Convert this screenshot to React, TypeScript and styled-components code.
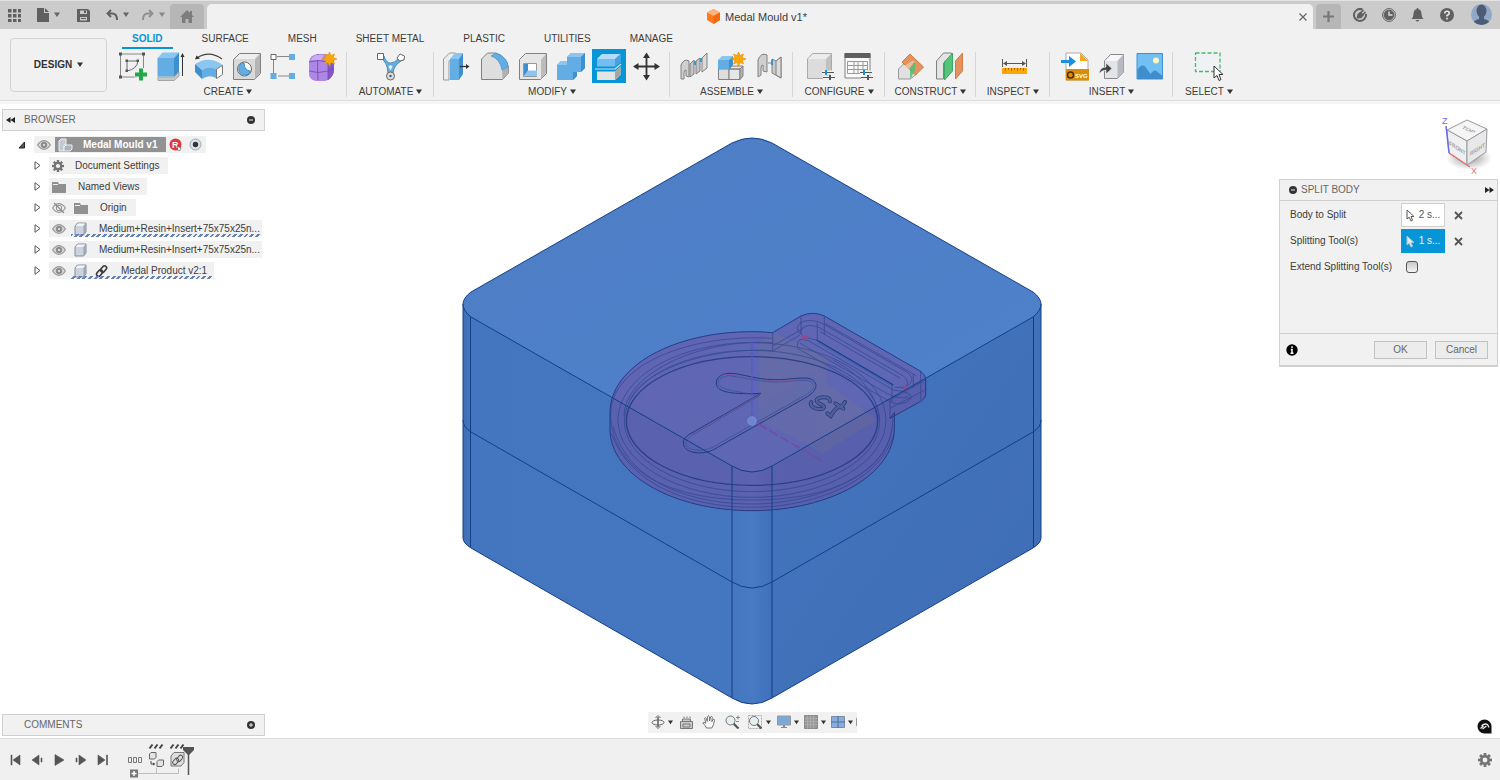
import React from "react";
import styled, { createGlobalStyle, css } from "styled-components";

const GlobalStyle = createGlobalStyle`
  *, *::before, *::after { box-sizing: border-box; }
  html, body { margin: 0; padding: 0; background: #fff; }
  body, button, input {
    font-family: "Liberation Sans", Arial, sans-serif;
    font-size: 10px;
    line-height: 14px;
    color: #3c3c3c;
  }
  button { border: 0; padding: 0; background: none; cursor: pointer; }
  svg { display: block; flex: none; }
`;

/* ---------- shell ---------- */

const Shell = styled.div`
  display: flex;
  flex-direction: column;
  min-height: 100vh;
`;

const TitleBar = styled.header`
  display: flex;
  align-items: stretch;
  height: 29px;
  padding-top: 3px;
  background: #cbcbcb;
  border-top: 1px solid #e2e2e2;
`;

const QuickTools = styled.div`
  display: flex;
  width: 170px;
`;

const QuickButton = styled.button<{ $width: number; $dim?: boolean }>`
  display: flex;
  align-items: center;
  justify-content: center;
  gap: 5px;
  width: ${(p) => p.$width}px;
  padding-bottom: 3px;
  color: ${(p) => (p.$dim ? "#8f8f8f" : "#606060")};
`;

const SideTab = styled.button<{ $width: number }>`
  display: flex;
  align-items: center;
  justify-content: center;
  width: ${(p) => p.$width}px;
  border-radius: 4px 4px 0 0;
  background: #b6b6b6;
  color: #7d7d7d;
`;

const DocumentTab = styled.div`
  display: flex;
  flex: 1;
  align-items: center;
  justify-content: center;
  margin: 0 3px;
  padding-left: 14px;
  border-radius: 5px 5px 0 0;
  background: #f1f1f1;
  font-size: 11px;
`;

const DocumentTitle = styled.div`
  display: flex;
  flex: 1;
  align-items: center;
  justify-content: center;
  gap: 5px;
`;

const CloseTab = styled.button`
  display: flex;
  padding: 4px 6px;
`;

const AccountTools = styled.div`
  display: flex;
  padding: 0 8px 0 4px;
`;

const Avatar = styled.button`
  margin-left: 10px;
  align-self: flex-start;
`;

/* ---------- ribbon ---------- */

const Ribbon = styled.div`
  display: flex;
  height: 72px;
  background: #f1f1f1;
  border-bottom: 1px solid #dcdcdc;
`;

const RibbonEdge = styled.div`
  height: 3px;
  background: #f5f5f5;
`;

const WorkspaceButton = styled.button`
  display: flex;
  align-items: center;
  justify-content: center;
  gap: 5px;
  width: 97px;
  height: 54px;
  margin: 9px 2px 0 10px;
  border: 1px solid #d2d2d2;
  border-radius: 4px;
  font-weight: bold;
  color: #333;
`;

const RibbonMain = styled.div`
  flex: 1;
`;

const TabRow = styled.nav`
  display: flex;
  gap: 19px;
  height: 20px;
  padding-left: 13px;
`;

const RibbonTab = styled.button<{ $active?: boolean }>`
  height: 20px;
  padding: 2px 10px 0;
  border-bottom: 2px solid transparent;
  white-space: nowrap;
  ${(p) =>
    p.$active &&
    css`
      border-color: #0696d7;
      color: #0696d7;
      font-weight: bold;
    `}
`;

const GroupRow = styled.div`
  display: flex;
`;

const Group = styled.section<{ $width: number }>`
  position: relative;
  display: flex;
  flex-direction: column;
  align-items: center;
  width: ${(p) => p.$width}px;
  padding-top: 2px;
  &:not(:last-child)::after {
    content: "";
    position: absolute;
    right: 0;
    top: 3px;
    width: 1px;
    height: 45px;
    background: #d6d6d6;
  }
`;

const IconRow = styled.div`
  display: flex;
  gap: 8px;
  height: 30px;
`;

const IconButton = styled.button<{ $active?: boolean }>`
  width: 30px;
  height: 30px;
  ${(p) =>
    p.$active &&
    css`
      background: #0696d7;
      box-shadow: 0 0 0 2px #0696d7;
    `}
`;

const GroupLabel = styled.button`
  display: flex;
  align-items: center;
  gap: 3px;
  height: 22px;
  white-space: nowrap;
`;

/* ---------- work area ---------- */

const WorkArea = styled.main`
  position: relative;
  display: grid;
  grid-template-columns: 263px 1fr 263px;
  flex: 1;
  min-height: 634px;
  padding: 5px 2px 2px;
  background: #fff;
`;

const Canvas = styled.svg`
  position: absolute;
  inset: 0;
  width: 100%;
  height: 100%;
`;

const LeftDock = styled.aside`
  position: relative;
  display: flex;
  flex-direction: column;
  justify-content: space-between;
`;

const RightDock = styled.aside`
  position: relative;
  display: flex;
  flex-direction: column;
  align-items: flex-end;
`;

const BottomDock = styled.div`
  position: relative;
  display: flex;
  align-items: flex-end;
  justify-content: center;
  padding: 0 0 3px 4px;
`;

const PanelHeader = styled.div<{ $left: number }>`
  display: flex;
  align-items: center;
  gap: 9px;
  height: 22px;
  padding: 0 9px 0 ${(p) => p.$left}px;
  border: 1px solid #d0d0d0;
  background: #f1f1f1;
`;

const PanelTitle = styled.h2`
  flex: 1;
  margin: 0;
  font-size: 10px;
  font-weight: normal;
  color: #666;
`;

const Tree = styled.ul`
  display: flex;
  flex-direction: column;
  gap: 4px;
  margin: 0;
  padding: 5px 0 0;
  list-style: none;
`;

const TreeItem = styled.li<{ $root?: boolean }>`
  display: flex;
  align-items: center;
  gap: ${(p) => (p.$root ? 7 : 6)}px;
  height: 17px;
  padding-left: ${(p) => (p.$root ? 15 : 31)}px;
  white-space: nowrap;
`;

const Expander = styled.button`
  width: 10px;
`;

const TreeBody = styled.div<{ $end: number; $hatched?: boolean }>`
  position: relative;
  display: flex;
  align-items: center;
  gap: 8px;
  height: 17px;
  padding: 0 ${(p) => p.$end}px 0 3px;
  background: #f1f1f1;
  ${(p) =>
    p.$hatched &&
    css`
      &::after {
        content: "";
        position: absolute;
        left: 22px;
        right: 2px;
        bottom: 0;
        height: 3px;
        background: repeating-linear-gradient(
          -45deg,
          transparent 0 2px,
          #6580b4 2px 4px
        );
      }
    `}
`;

const TreeLabel = styled.span<{ $indent: number }>`
  padding-left: ${(p) => p.$indent}px;
`;

const RootName = styled.div`
  display: flex;
  align-items: center;
  gap: 10px;
  width: 111px;
  height: 15px;
  margin-left: -4px;
  padding-left: 3px;
  background: #929292;
  color: #fff;
  font-weight: bold;
`;

const RootMarks = styled.div`
  display: flex;
  gap: 7px;
  margin-left: -5px;
`;

const CubeHolder = styled.div`
  padding: 5px 6px 0 0;
  height: 70px;
`;

const Dialog = styled.section`
  width: 219px;
  border: 1px solid #d0d0d0;
  border-bottom: 2px solid #cfcfcf;
  background: #f1f1f1;
`;

const DialogHeader = styled.div`
  display: flex;
  align-items: center;
  gap: 4px;
  height: 21px;
  padding: 0 3px 0 9px;
  border-bottom: 1px solid #d0d0d0;
`;

const DialogBody = styled.div`
  height: 133px;
  padding: 1px 10px 0;
  border-bottom: 1px solid #cfcfcf;
`;

const Field = styled.div`
  display: grid;
  grid-template-columns: 111px 44px 1fr;
  align-items: center;
  height: 26px;
`;

const PickButton = styled.button<{ $active?: boolean }>`
  display: flex;
  align-items: center;
  justify-content: center;
  gap: 4px;
  height: 24px;
  border: 1px solid ${(p) => (p.$active ? "#0696d7" : "#d0d0d0")};
  background: ${(p) => (p.$active ? "#0696d7" : "#fff")};
  color: ${(p) => (p.$active ? "#e6f4fb" : "#555")};
`;

const ClearButton = styled.button`
  display: flex;
  justify-content: center;
  width: 27px;
`;

const CheckBox = styled.input`
  appearance: none;
  width: 12px;
  height: 12px;
  margin: 0 0 0 5px;
  border: 1px solid #555;
  border-radius: 3px;
  background: linear-gradient(#c9c9c9, #f4f4f4);
`;

const DialogFooter = styled.div`
  display: flex;
  align-items: center;
  gap: 8px;
  height: 31px;
  padding: 0 9px 0 6px;
`;

const InfoButton = styled.button`
  margin-right: auto;
`;

const DialogButton = styled.button`
  width: 53px;
  height: 18px;
  border: 1px solid #c2c2c2;
  background: #ececec;
  color: #666;
  line-height: 16px;
`;

const AssistButton = styled.button`
  margin: auto 6px 2px 0;
`;

const NavBar = styled.div`
  display: flex;
  align-items: center;
  width: 209px;
  height: 21px;
  padding: 0 0 1px 1px;
  background: #f1f1f1;
`;

const NavButton = styled.button<{ $width: number }>`
  display: flex;
  align-items: center;
  justify-content: center;
  gap: 3px;
  width: ${(p) => p.$width}px;
`;

const NavEnd = styled.span`
  width: 1px;
  height: 8px;
  margin-left: auto;
  background: #999;
`;

/* ---------- timeline ---------- */

const Timeline = styled.footer`
  display: flex;
  align-items: center;
  height: 42px;
  padding: 0 8px 0 4px;
  border-top: 1px solid #dcdcdc;
  background: #f0f0f0;
`;

const PlayButton = styled.button`
  display: flex;
  align-items: center;
  justify-content: center;
  width: 22px;
  height: 22px;
`;

const TimelineTrack = styled.div`
  margin-left: 12px;
  flex: 1;
`;

/* ---------- icons ---------- */

const Caret = ({ color = "#333", size = 6 }: { color?: string; size?: number }) => (
  <svg width={size} height={size} viewBox="0 0 6 6">
    <path d="M0 .5h6L3 5z" fill={color} />
  </svg>
);

const G = "#808080";
const BLUE = "#62aee4";
const DEEP = "#3d8fcd";
const LIGHT = "#8ac6f0";

const Ico = ({ children }: { children: React.ReactNode }) => (
  <svg width="30" height="30" viewBox="0 0 30 30" fill="none" strokeLinejoin="round">
    {children}
  </svg>
);

const SketchIcon = () => (
  <Ico>
    <path d="M2.500 3h23v23h-23z" stroke="#888" />
    <path d="M9 10h11q-1 8-11 10z" stroke="#666" />
    <path d="M1 1.500h3v3H1zM24 1.500h3v3h-3zM1 24.500h3v3H1zM7.500 8.500H10V11H7.500zM18.500 8.500H21V11h-2.500zM7.500 18.500H10V21H7.500z" fill="#555" />
    <path d="M23 17v13M16.500 23.500h13" stroke="#f1f1f1" strokeWidth="6" />
    <path d="M23 17.500v12M17 23.500h12" stroke="#22a84b" strokeWidth="4" />
  </Ico>
);
const ExtrudeIcon = () => (
  <Ico>
    <path d="M2 26h16l5-5v4l-5 4.500H2z" fill="#c8c8c8" stroke="#a5a5a5" />
    <path d="M1.500 7H18v18.500H1.500z" fill={BLUE} />
    <path d="M1.500 7l5-5.500H23L18 7z" fill={LIGHT} />
    <path d="M18 7l5-5.500v19l-5 5z" fill={DEEP} />
    <path d="M26.500 25V4" stroke="#333" />
    <path d="M24.500 6l2-4 2 4z" fill="#333" />
  </Ico>
);
const RevolveIcon = () => (
  <Ico>
    <path d="M3 7q12-8 25 1" stroke="#444" strokeWidth="1.200" />
    <path d="M1 8.500l1.500-4 3.500 3z" fill="#333" />
    <path d="M1 13q14-9 28 1l-7 4q-7-4-14 1z" fill={LIGHT} />
    <path d="M1 13l7 6v9l-7-7z" fill={DEEP} />
    <path d="M8 19q7-5 14-1v9q-7-4-14 1z" fill={BLUE} />
    <path d="M22.500 18l6-3.500v9l-6 4z" fill="#fff" stroke="#777" />
  </Ico>
);
const HoleIcon = () => (
  <Ico>
    <path d="M1.500 8.500l6-6h21v20l-6 6h-21z" fill="#d9d9d9" stroke={G} />
    <path d="M23 8.500l5-5.500v19l-5 6z" fill="#b5b5b5" />
    <path d="M3 8l5-5h19l-5 5z" fill="#efefef" />
    <circle cx="12.500" cy="18" r="7" fill="#fff" stroke="#666" />
    <path d="M12 12a6 6 0 1 0 6.500 8q-6 0-6.500-8z" fill={BLUE} stroke={DEEP} />
  </Ico>
);
const PatternIcon = () => (
  <Ico>
    <path d="M3.500 7v15M7 5.500h12M8 25h11" stroke="#888" />
    <path d="M1 3.500h5v5H1z" fill="#fff" stroke="#666" />
    <path d="M19 3h6v6h-6zM19 22h6v6h-6zM.5 22h6v6h-6z" fill={BLUE} />
  </Ico>
);
const FormIcon = () => (
  <Ico>
    <path d="M1 11q1-7 8-8h10q6 3 7 9v9q-3 8-9 9H8q-6-1-7-6z" fill="#ad86e6" />
    <path d="M20 12l6-3v12q-2 6-6 8z" fill="#8658c6" />
    <path d="M1 11q9-3 19 0l5-3M10 3q-1 12 0 26M1 20q9 3 19 0l6-3M20 11v18" stroke="#7346b5" strokeWidth=".8" />
    <path d="M3 9q2-5 7-5h6l-3 5z" fill="#c9adf3" />
    <path d="M21.500 1l1.500 3.600 3.500-1.600-1.300 3.500 3.800 1.500-3.800 1.500 1.300 3.500-3.500-1.500-1.500 3.800-1.500-3.800-3.500 1.500 1.500-3.500-3.800-1.500 3.800-1.500-1.500-3.500 3.500 1.600z" fill="#fba60a" stroke="#e98e00" strokeWidth=".6" />
  </Ico>
);
const AutomateIcon = () => (
  <Ico>
    <path d="M4.500 7q7 4 7.500 15h5q1-8 8-12l-2-3q-4 5-8.500 5T8 5z" fill={BLUE} stroke="#4a8fbf" />
    <path d="M14.500 14l2 1.500-2 4-2-4z" fill="#f1f1f1" />
    <path d="M1.500 2.500h6v6h-6z" fill="#fff" stroke="#666" />
    <path d="M21 7l3-4 4.500 2-.5 4-4.500 1z" fill="#fff" stroke="#666" />
    <circle cx="14.500" cy="25" r="4" fill="#ddd" stroke="#666" />
    <circle cx="14.500" cy="25" r="1.200" fill="#555" />
  </Ico>
);
const PressPullIcon = () => (
  <Ico>
    <path d="M1.500 8l6-6h6v4L7 10v19H1.500z" fill="#ececec" stroke="#999" />
    <path d="M8 8h9v21H8z" fill={BLUE} />
    <path d="M8 8l5-6h8l-4 6z" fill={LIGHT} />
    <path d="M17 8l4-6v21l-4 6z" fill={DEEP} />
    <path d="M18 15.500h6" stroke="#333" strokeWidth="1.300" />
    <path d="M24 13l3.500 2.500L24 18z" fill="#333" />
  </Ico>
);
const FilletIcon = () => (
  <Ico>
    <path d="M1.500 8l6-6h8q11 3 13 15v5l-6 6.500h-21z" fill="#dedede" stroke={G} />
    <path d="M22 19l6.500-3v6l-6 6z" fill="#b0b0b0" />
    <path d="M11 5l5-3q11 4 12.500 14L22 19q-2-11-11-14z" fill={BLUE} stroke={DEEP} strokeWidth=".6" />
  </Ico>
);
const ShellIcon = () => (
  <Ico>
    <path d="M1.500 8.500l6-6h21v20l-6 6h-21z" fill="#e6e6e6" stroke={G} />
    <path d="M23 8.500l5-5.500v19l-5 6z" fill="#bcbcbc" />
    <path d="M5.500 12.500h13v13h-13z" fill="#fff" stroke="#999" />
    <path d="M6 13h4v7l-4 5z" fill={DEEP} />
    <path d="M6 25l4-5.500h9V25z" fill={LIGHT} />
  </Ico>
);
const CombineIcon = () => (
  <Ico>
    <path d="M1 14l4-4h6V6l4-4h14v15l-4 4h-4v4l-4 4H1z" fill={BLUE} />
    <path d="M1 14l4-4h6v4zM11 6l4-4h14l-4 4z" fill={LIGHT} />
    <path d="M25 6l4-4v15l-4 4h-4v4l-4 4v-8h8z" fill={DEEP} />
  </Ico>
);
const SplitIcon = () => (
  <Ico>
    <path d="M3 8l5-5h18.500v8L21 15.500H3z" fill="#73bdf2" />
    <path d="M3 8l5-5h18.500L21 8z" fill="#b2dcf9" />
    <path d="M21 8l5.500-5v8L21 15.500z" fill="#4a9fdd" />
    <path d="M1 18h20l6-5" stroke="#bfe4fa" strokeWidth="1.200" />
    <path d="M3 20.500h18l5.500-5V24L21 29H3z" fill="#e4e4e4" />
    <path d="M21 20.500l5.500-5V24L21 29z" fill="#a5a5a5" />
  </Ico>
);
const MoveIcon = () => (
  <Ico>
    <path d="M14.500 4v22M3 15.500h23" stroke="#333" strokeWidth="1.800" />
    <path d="M11 7l3.500-5.500L18 7zM11 24l3.500 5.500L18 24zM6.500 12L1 15.500 6.500 19zM22.500 12l5.500 3.500-5.500 3.500z" fill="#333" />
  </Ico>
);
const JointIcon = () => (
  <Ico>
    <path d="M2 28V14q3-7 8-4v16l-3-1v-6q-2 0-2 3v6z" fill="#cfcfcf" stroke={G} />
    <path d="M11 26V13l4-4v14zM17 23V10l4-3v13z" fill="#c6c6c6" stroke={G} />
    <path d="M23 21V7l5-5v15z" fill="#dadada" stroke={G} />
    <path d="M16 10v4M22 7v4" stroke="#1b8fd6" strokeWidth="1.600" />
  </Ico>
);
const ComponentIcon = () => (
  <Ico>
    <path d="M1.500 18H12v10.500H1.500z" fill="#dedede" stroke={G} />
    <path d="M12 18l3-3h11l-3 3zM12 18h11v10.500H12z" fill="#e6e6e6" stroke={G} />
    <path d="M23 18l3-3v10l-3 3.500z" fill="#b5b5b5" stroke={G} />
    <path d="M1 9h11v9H1z" fill={BLUE} />
    <path d="M1 9l4-4h11l-4 4z" fill={LIGHT} />
    <path d="M12 9l4-4v9l-4 4z" fill={DEEP} />
    <path d="M21.500 1l1.500 3.600 3.500-1.600-1.300 3.500 3.800 1.500-3.800 1.500 1.300 3.500-3.500-1.500-1.500 3.800-1.500-3.800-3.500 1.500 1.500-3.500-3.800-1.500 3.800-1.500-1.500-3.500 3.500 1.600z" fill="#fba60a" stroke="#e98e00" strokeWidth=".6" />
  </Ico>
);
const RigidIcon = () => (
  <Ico>
    <path d="M3 26V9q3-8 9-5v17l-4-1v-6q-2 0-2 3v7z" fill="#cfcfcf" stroke={G} />
    <path d="M17 22V8l4 2 5-4v21z" fill="#c9c9c9" stroke={G} />
    <path d="M21 10l5-4v21l-5-3z" fill="#dcdcdc" stroke={G} />
    <path d="M13 12h3" stroke="#bbb" strokeWidth="2" />
    <path d="M17 9v5" stroke="#1b8fd6" strokeWidth="1.600" />
  </Ico>
);
const Sliders = () => (
  <g>
    <path d="M17 21.500h12M18 26.500h12" stroke="#f1f1f1" strokeWidth="4" />
    <path d="M17 21.500h12M18 26.500h12" stroke="#555" strokeWidth="1.200" />
    <path d="M21 19v5" stroke="#1b8fd6" strokeWidth="2" />
    <path d="M25 24v5" stroke="#555" strokeWidth="2" />
  </g>
);
const ConfigureIcon = () => (
  <Ico>
    <path d="M2.500 8l5-5.500h19V22l-5 5.500h-19z" fill="#dcdcdc" stroke="#aaa" />
    <path d="M3 8l5-5h18l-5 5z" fill="#ececec" />
    <path d="M21 8l5-5v19l-5 5z" fill="#c0c0c0" />
    <Sliders />
  </Ico>
);
const TableIcon = () => (
  <Ico>
    <path d="M2 3h25v24H2z" fill="#fafafa" stroke={G} />
    <path d="M1.500 2h26v5h-26z" fill="#606060" />
    <path d="M4.500 10.500h20v12h-20zM4.500 14.500h20M4.500 18.500h20M11 10.500v12M15 10.500v12M20 10.500v12" stroke="#999" />
    <Sliders />
  </Ico>
);
const MidplaneIcon = () => (
  <Ico>
    <path d="M1.500 18l5-5h13v10l-6 5h-12z" fill="#e0e0e0" stroke="#999" />
    <path d="M13 3l13.500 13-8 8L5 11z" fill="#e2935f" stroke="#d17c43" />
    <path d="M13 17l5-6v8l-4 8h-1z" fill="#4fbf77" opacity=".85" />
    <path d="M6 16l9-6h3l-6 8z" fill="#ecd9cb" opacity=".6" />
  </Ico>
);
const OffsetPlaneIcon = () => (
  <Ico>
    <path d="M1.500 10l7-8h8v4l-8 6v16h-7z" fill="#e4e4e4" stroke={G} />
    <path d="M9.500 11l8-9v18l-8 9z" fill="#56c57c" stroke="#3aa961" />
    <path d="M20.500 10l7-8v18l-7 8z" fill="#e2935f" stroke="#d17c43" />
  </Ico>
);
const MeasureIcon = () => (
  <Ico>
    <path d="M4.500 8v8M28.500 8v8M6 12.500h21" stroke="#555" />
    <path d="M5 12.500l4-2.500v5zM28 12.500L24 10v5z" fill="#555" />
    <path d="M4 17h25v6H4z" fill="#fba60a" />
    <path d="M7.500 17v3M10.500 17v2M13.500 17v3M16.500 17v2M19.500 17v3M22.500 17v2M25.500 17v3" stroke="#b06f00" />
  </Ico>
);
const SvgIcon = () => (
  <Ico>
    <path d="M7 2h15l7 7v20H7z" fill="#fff" stroke="#ababab" />
    <path d="M21 2l8 8h-8z" fill="#f2a81d" />
    <path d="M7 18h23v11.500H7z" fill="#d98e0a" />
    <circle cx="11.500" cy="24" r="3" stroke="#4a2f00" strokeWidth="1.500" />
    <text x="16" y="27" fontSize="6" fontWeight="bold" fill="#fff">SVG</text>
    <path d="M2 9h8V5l7 5.500-7 5.500v-4H2z" fill="#1b8fe0" />
  </Ico>
);
const DeriveIcon = () => (
  <Ico>
    <path d="M7.500 10l6-6.500h13V21l-6 6.500h-13z" fill="#e3e4e8" stroke="#888" />
    <path d="M8 10l6-6h12l-6 6z" fill="#f7f7f9" />
    <path d="M20.500 10l6-6.500V21l-6 6.500z" fill="#b7bac1" />
    <path d="M2 23q1-7 7-7v-4l6 5.500-6 5.500v-4q-4 0-7 4z" fill="#444" stroke="#f1f1f1" strokeWidth=".6" />
  </Ico>
);
const CanvasIcon = () => (
  <Ico>
    <path d="M2 2.500h25.500V28H2z" fill="#72bff4" stroke="#3f91cd" />
    <circle cx="21" cy="9.500" r="3" fill="#fdf5c0" />
    <path d="M2.500 19q4-7 8-3l5 7q4-6 7-2l5 4v3h-25z" fill="#3f8ecb" />
  </Ico>
);
const SelectIcon = () => (
  <Ico>
    <path d="M1.500 2h24.500v18.500H1.500z" fill="#eef2f5" stroke="#4cb86f" strokeWidth="1.300" strokeDasharray="4 2" />
    <path d="M20 15v12l3-2.500 2 5 2-1-2-5h4z" fill="#fff" stroke="#333" />
  </Ico>
);

const Eye = ({ off }: { off?: boolean }) => (
  <svg width="14" height="12" viewBox="0 0 14 12" fill="none">
    <path d="M.6 6Q3.500 1.700 7 1.700T13.400 6Q10.500 10.300 7 10.300T.6 6z" stroke="#999" strokeWidth="1.200" fill={off ? "none" : "#d8d8d8"} />
    <circle cx="7" cy="6" r="2.800" fill={off ? "none" : "#8c8c8c"} stroke="#8c8c8c" />
    {off ? <path d="M2 1l10 10" stroke="#8c8c8c" strokeWidth="1.200" /> : <circle cx="7" cy="6" r="1" fill="#eee" />}
  </svg>
);
const Folder = () => (
  <svg width="14" height="12" viewBox="0 0 14 12">
    <path d="M0 1h6l1 2h7v9H0z" fill="#909090" />
    <path d="M1 3.500h5" stroke="#eee" />
  </svg>
);
const BodyIcon = () => (
  <svg width="13" height="14" viewBox="0 0 13 14" strokeLinejoin="round">
    <path d="M1 4l2.500-3H12v9l-2.500 3H1z" fill="#cdd3de" stroke="#858d9b" />
    <path d="M1.500 4L4 1.500h7.500L9 4z" fill="#f2f4f8" />
    <path d="M9.500 4l2-2.500V10l-2 2.500z" fill="#9aa5b6" />
  </svg>
);
const LinkIcon = () => (
  <svg width="13" height="14" viewBox="0 0 13 14" fill="none" stroke="#3a3a3a" strokeWidth="1.600">
    <rect x="-3.500" y="-2" width="7" height="4.200" rx="2.100" transform="translate(4.500 9) rotate(-50)" />
    <rect x="-3.500" y="-2" width="7" height="4.200" rx="2.100" transform="translate(8.500 5) rotate(-50)" />
  </svg>
);
const Arrow = () => (
  <svg width="8" height="9" viewBox="0 0 8 9">
    <path d="M2 .7l5 3.800-5 3.800z" fill="#fff" stroke="#555" />
  </svg>
);
const gearTeeth = [0, 45, 90, 135, 180, 225, 270, 315];
const Gear = ({ size = 12 }: { size?: number }) => (
  <svg width={size} height={size} viewBox="-6 -6 12 12">
    {gearTeeth.map((a) => (
      <rect key={a} x="-1.200" y="-6" width="2.400" height="3" fill="#747474" transform={`rotate(${a})`} />
    ))}
    <circle r="3.200" fill="none" stroke="#747474" strokeWidth="2.200" />
  </svg>
);
const RoundMark = ({ plus }: { plus?: boolean }) => (
  <svg width="8" height="8" viewBox="0 0 8 8">
    <circle cx="4" cy="4" r="4" fill="#333" />
    <path d={plus ? "M2 4h4M4 2v4" : "M2 4h4"} stroke="#eee" />
  </svg>
);
const DoubleArrow = ({ left }: { left?: boolean }) => (
  <svg width="9" height="6" viewBox="0 0 9 6">
    <path d={left ? "M4.500 0v6L0 3zM9 0v6L4.500 3z" : "M0 0v6l4.500-3zM4.500 0v6L9 3z"} fill="#222" />
  </svg>
);
const Pointer = ({ active }: { active?: boolean }) => (
  <svg width="9" height="13" viewBox="0 0 9 13">
    <path d="M1 1v9l2.200-1.800L5 12l1.500-.8L5 7.500h3z" fill={active ? "#e9e9e9" : "#fff"} stroke={active ? "#a9c4d4" : "#555"} />
  </svg>
);
const Cross = () => (
  <svg width="9" height="9" viewBox="0 0 9 9">
    <path d="M1 1l7 7M8 1L1 8" stroke="#555" strokeWidth="1.800" />
  </svg>
);

/* ---------- drawings ---------- */

const engravedS = "M690 304Q690 292 672 292T650 300Q650 308 664 314T668 326Q652 330 640 322T634 306";
const engravedT = "M735 306L728 316Q706 322 692 348L682 340M706 310L730 326";

const Model = () => (
  <Canvas viewBox="0 104 1500 634" preserveAspectRatio="xMidYMid meet" aria-label="Medal mould model">
    <defs>
      <linearGradient id="top" x1="0" y1="0" x2="1" y2="1">
        <stop offset="0" stopColor="#4d7dc5" />
        <stop offset="1" stopColor="#4f82cb" />
      </linearGradient>
      <linearGradient id="left" x1="0" y1="0" x2="1" y2="0">
        <stop offset="0" stopColor="#416fb6" />
        <stop offset=".04" stopColor="#4475bf" />
        <stop offset="1" stopColor="#4577c1" />
      </linearGradient>
      <linearGradient id="right" x1="0" y1="0" x2="1" y2="1">
        <stop offset="0" stopColor="#4275be" />
        <stop offset="1" stopColor="#3f6db4" />
      </linearGradient>
      <linearGradient id="post" x1="0" y1="0" x2="1" y2="0">
        <stop offset="0" stopColor="#4575bf" />
        <stop offset=".5" stopColor="#487ac4" />
        <stop offset="1" stopColor="#4070b8" />
      </linearGradient>
    </defs>
    <path d="M463 304V538Q463 543 471 548L732 698V466z" fill="url(#left)" />
    <path d="M1041 304V538Q1041 543 1033 548L772 698V466z" fill="url(#right)" />
    <path d="M732 460V698Q752 710 772 698V460z" fill="url(#post)" />
    <path d="M732 143Q752 133 772 143L1033 292Q1049 304 1033 317L772 466Q752 478 732 466L471 317Q455 304 471 292z" fill="url(#top)" />
    <g transform="translate(600 300) scale(.33333)" fill="none">
      <path d="M518 98L603 48Q638 32 673 48L955 210Q977 222 977 240V283Q977 297 955 308L870 355 883 338V385C883 525 690 632 456 632S30 525 30 388V338C30 200 220 95 456 95Q490 95 518 98z" fill="#6f4b9d" fillOpacity=".5" stroke="#253b88" strokeWidth="3" />
      <path d="M478 128L518 100 600 130 680 170V250L830 360 668 460 478 362z" fill="#7a7c86" fillOpacity=".22" />
      <path d="M646 210L478 318V375L646 450z" fill="#5666bd" fillOpacity=".15" />
      <g stroke="#27428c" strokeWidth="2.500" opacity=".7">
        <ellipse cx="456" cy="363" rx="377" ry="193" stroke="#16307c" strokeWidth="4" />
        <ellipse cx="456" cy="363" rx="383" ry="212" />
        <ellipse cx="456" cy="360" rx="402" ry="232" />
        <path d="M518 115C280 100 30 190 32 345S190 600 456 600 882 500 878 350" />
        <path d="M518 128C300 115 72 220 72 350M40 380C80 540 260 612 456 612S860 520 875 390" />
        <path d="M518 152C330 140 130 210 90 300M34 400C90 560 280 622 456 622S840 550 882 400" />
        <path d="M518 98V153L600 105M518 138L610 85M603 48V100M673 48V105M652 68V120" />
        <path d="M650 120Q592 112 592 82 600 58 640 62 660 65 670 72L920 216Q945 232 930 252L905 265" />
        <path d="M610 108Q598 100 605 86 625 68 660 84L910 228Q930 244 918 262L885 262" />
        <path d="M592 140Q590 108 625 122L880 270Q930 275 935 292 925 312 890 312L870 305 605 152Q592 148 592 140z" />
        <path d="M600 130L860 280Q900 300 925 290M876 255V305M870 300V355M870 300L977 240M962 212V300M940 222V262M870 325L975 270" />
        <path d="M660 95L900 234M675 70L950 228M700 180Q830 250 838 362" />
      </g>
      <path d="M650 120L880 255" stroke="#173d8b" strokeWidth="4" />
      <path d="M654 128L880 260" stroke="#2f62ab" strokeWidth="2" />
      <path d="M604 105L628 112 608 118zM910 258L928 262 912 268z" fill="#8a4a92" stroke="#954b8a" strokeWidth="2" />
      <path d="M390 220C362 220 347 235 349 253 352 277 400 284 483 280L270 402C238 420 246 452 285 458 320 462 340 450 360 438L622 290C655 270 655 245 630 236 600 229 560 243 500 238 450 233 420 220 390 220z" stroke="#213a85" strokeWidth="3" />
      <path d="M388 227C364 229 353 240 354 252 362 270 410 274 478 287L276 406C250 424 250 444 285 450 315 455 335 444 355 432L620 283C646 266 648 250 628 243 600 236 560 250 500 245L430 234 388 227z" stroke="#34508f" strokeWidth="2" />
      <path d="M276 402L480 283M370 224Q400 220 440 234M500 241Q570 246 600 238" stroke="#84508f" strokeWidth="2" />
      <path d={engravedS} stroke="#2a427f" strokeWidth="12" strokeLinecap="round" />
      <path d={engravedT} stroke="#2a427f" strokeWidth="12" strokeLinecap="round" />
      <path d={engravedS} stroke="#5d66a8" strokeWidth="6" strokeLinecap="round" />
      <path d={engravedT} stroke="#5d66a8" strokeWidth="6" strokeLinecap="round" />
      <path d={engravedS} stroke="#3a4f8c" strokeWidth="1.500" />
      <path d={engravedT} stroke="#3a4f8c" strokeWidth="1.500" />
      <path d="M456 122V350" stroke="#5757cc" strokeWidth="4" strokeDasharray="28 7" />
      <path d="M475 350L665 243" stroke="#3f7fa6" strokeWidth="3" strokeDasharray="26 8" opacity=".7" />
      <path d="M475 372L668 484" stroke="#774a9c" strokeWidth="4" strokeDasharray="30 8" />
      <circle cx="456" cy="363" r="13" fill="#6e84cf" stroke="#8595d8" strokeWidth="2" />
    </g>
    <g fill="none" stroke="#123f88" strokeWidth="1">
      <path d="M732 143Q752 133 772 143L1033 292Q1049 304 1033 317L772 466Q752 478 732 466L471 317Q455 304 471 292z" />
      <path d="M463 304V538Q463 543 471 548L732 698Q752 710 772 698L1033 548Q1041 543 1041 538V304" />
      <path d="M463 420Q463 427 471 432L732 582Q752 594 772 582L1033 432Q1041 427 1041 420" />
      <path d="M470.500 317V547M1033.500 317V547M732 466V698M772 466V698" />
    </g>
  </Canvas>
);

const ViewCube = () => (
  <svg width="52" height="62" viewBox="0 0 52 62" fill="none">
    <defs>
      <radialGradient id="cubeShadow">
        <stop offset="0" stopColor="#777" stopOpacity=".8" />
        <stop offset="1" stopColor="#888" stopOpacity="0" />
      </radialGradient>
    </defs>
    <ellipse cx="29" cy="44" rx="23" ry="12" fill="url(#cubeShadow)" />
    <path d="M7 16L27 6 47 15 27 27z" fill="#f5f5f5" stroke="#999" />
    <path d="M7 16L27 27V51L9 39z" fill="#f0f0f1" stroke="#999" />
    <path d="M47 15L27 27V51L46 38z" fill="#e8e8ea" stroke="#999" />
    <path d="M6 12L9 39" stroke="#6b6bea" strokeWidth="1.500" />
    <path d="M9 39L30 53" stroke="#e47373" strokeWidth="1.500" />
    <g fontFamily="Liberation Sans, Arial, sans-serif" fontWeight="bold" fill="#a3a3a3">
      <text transform="matrix(.85 .4 -.6 .45 21 14)" fontSize="7">TOP</text>
      <text transform="matrix(.8 .5 0 1 9 31)" fontSize="6">FRONT</text>
      <text transform="matrix(.8 -.5 0 1 30 42)" fontSize="6">RIGHT</text>
    </g>
    <g fontFamily="Liberation Sans, Arial, sans-serif" fontSize="9">
      <text x="2" y="10" fill="#6b6bf0">Z</text>
      <text x="31" y="60" fill="#f07070">X</text>
    </g>
  </svg>
);

const TimelineDrawing = () => (
  <svg width="72" height="36" viewBox="126 742 72 36" fill="none" strokeLinejoin="round">
    <path d="M128.500 757.500h3v5h-3zM133.500 757.500h3v5h-3zM138.500 757.500h3v5h-3z" stroke="#777" />
    <path d="M149.500 748.500l3-4M154.500 748.500l3-4M159.500 748.500l3-4M170.500 748.500l3-4M175.500 748.500l3-4M180.500 748.500l3-4" stroke="#444" strokeWidth="2" />
    <path d="M149.500 754l1.500-1.500h5v5l-1.500 1.500h-5zM157 761.500l1.500-1.500h5v5l-1.500 1.500h-5z" fill="#e4e4e4" stroke="#666" />
    <path d="M151 761v3h3" stroke="#444" />
    <path d="M153 762.500l2.500 1.500-2.500 1.500z" fill="#444" />
    <path d="M171 756l3-3.500h10v10l-3 3.500h-10z" fill="#dedede" stroke="#777" />
    <g stroke="#555">
      <rect x="-4" y="-2" width="7" height="4" rx="2" transform="translate(176 761) rotate(-50)" />
      <rect x="-4" y="-2" width="7" height="4" rx="2" transform="translate(180 758) rotate(-50)" />
    </g>
    <path d="M138 773.500h40.500v-5M156.500 773v-5" stroke="#bdbdbd" />
    <path d="M130 769.500h8v8h-8z" fill="#777" />
    <path d="M131.500 773.500h5M134 771v5" stroke="#fff" strokeWidth="1.500" />
    <path d="M188.500 750v25" stroke="#555" strokeWidth="1.500" />
    <path d="M183 747h11v3l-5 5h-1l-5-5z" fill="#555" />
  </svg>
);

/* ---------- data ---------- */

const tabs = ["SOLID", "SURFACE", "MESH", "SHEET METAL", "PLASTIC", "UTILITIES", "MANAGE"];

type Tool = { name: string; icon: React.FC; active?: boolean };
const groups: { label: string; width: number; tools: Tool[] }[] = [
  {
    label: "CREATE",
    width: 238,
    tools: [
      { name: "Create sketch", icon: SketchIcon },
      { name: "Extrude", icon: ExtrudeIcon },
      { name: "Revolve", icon: RevolveIcon },
      { name: "Hole", icon: HoleIcon },
      { name: "Pattern", icon: PatternIcon },
      { name: "Create form", icon: FormIcon },
    ],
  },
  { label: "AUTOMATE", width: 87, tools: [{ name: "Automate", icon: AutomateIcon }] },
  {
    label: "MODIFY",
    width: 236,
    tools: [
      { name: "Press pull", icon: PressPullIcon },
      { name: "Fillet", icon: FilletIcon },
      { name: "Shell", icon: ShellIcon },
      { name: "Combine", icon: CombineIcon },
      { name: "Split body", icon: SplitIcon, active: true },
      { name: "Move", icon: MoveIcon },
    ],
  },
  {
    label: "ASSEMBLE",
    width: 123,
    tools: [
      { name: "Joint", icon: JointIcon },
      { name: "New component", icon: ComponentIcon },
      { name: "Rigid group", icon: RigidIcon },
    ],
  },
  {
    label: "CONFIGURE",
    width: 92,
    tools: [
      { name: "Configure", icon: ConfigureIcon },
      { name: "Configuration table", icon: TableIcon },
    ],
  },
  {
    label: "CONSTRUCT",
    width: 91,
    tools: [
      { name: "Midplane", icon: MidplaneIcon },
      { name: "Offset plane", icon: OffsetPlaneIcon },
    ],
  },
  { label: "INSPECT", width: 74, tools: [{ name: "Measure", icon: MeasureIcon }] },
  {
    label: "INSERT",
    width: 123,
    tools: [
      { name: "Insert SVG", icon: SvgIcon },
      { name: "Derive", icon: DeriveIcon },
      { name: "Canvas", icon: CanvasIcon },
    ],
  },
  { label: "SELECT", width: 72, tools: [{ name: "Select", icon: SelectIcon }] },
];

const tree: { label: string; icons: React.ReactNode; indent: number; end: number; hatched?: boolean }[] = [
  { label: "Document Settings", icons: <Gear />, indent: 3, end: 8 },
  { label: "Named Views", icons: <Folder />, indent: 4, end: 7 },
  { label: "Origin", icons: <><Eye off /><Folder /></>, indent: 4, end: 9 },
  { label: "Medium+Resin+Insert+75x75x25n...", icons: <><Eye /><BodyIcon /></>, indent: 4, end: 2, hatched: true },
  { label: "Medium+Resin+Insert+75x75x25n...", icons: <><Eye /><BodyIcon /></>, indent: 4, end: 2 },
  { label: "Medal Product v2:1", icons: <><Eye /><BodyIcon /><LinkIcon /></>, indent: 5, end: 7, hatched: true },
];

const transport = [
  { name: "Go to start", d: "M2 1h1v10H2zM11 1v10L4 6z" },
  { name: "Step back", d: "M8 1v10L1 6zM10 4h1v4h-1z" },
  { name: "Play", d: "M2 .5v11L11 6z" },
  { name: "Step forward", d: "M1 4h1v4H1zM4 1v10l7-5z" },
  { name: "Go to end", d: "M1 1v10l7-5zM9.500 1h1v10h-1z" },
];

export default function App() {
  return (
    <Shell>
      <GlobalStyle />
      <TitleBar>
        <QuickTools>
          <QuickButton $width={28} aria-label="Data panel">
            <svg width="13" height="13" viewBox="0 0 13 13" fill="currentColor">
              {[0, 5, 10].map((y) => [0, 5, 10].map((x) => <rect key={`${x}-${y}`} x={x} y={y} width="3.500" height="3.500" />))}
            </svg>
          </QuickButton>
          <QuickButton $width={40} aria-label="File">
            <svg width="12" height="14" viewBox="0 0 12 14" fill="currentColor">
              <path d="M0 0h7v5h5v9H0zM8 0l4 4H8z" />
            </svg>
            <Caret color="#666" />
          </QuickButton>
          <QuickButton $width={30} aria-label="Save">
            <svg width="13" height="13" viewBox="0 0 13 13" fill="currentColor" fillRule="evenodd">
              <path d="M0 0h11l2 2v11H0zM3 1.500V5h7V1.500zM3 8v3.500h7V8z" />
              <path d="M7 1.500h2V4H7zM4 9h5v1H4z" />
            </svg>
          </QuickButton>
          <QuickButton $width={38} aria-label="Undo">
            <svg width="12" height="12" viewBox="0 0 12 12" fill="none" stroke="currentColor" strokeWidth="1.900">
              <path d="M5 1L1.500 4.500 5 8M2 4.500h4q5 0 5 6.500" />
            </svg>
            <Caret color="#666" />
          </QuickButton>
          <QuickButton $width={34} $dim aria-label="Redo">
            <svg width="12" height="12" viewBox="0 0 12 12" fill="none" stroke="currentColor" strokeWidth="1.900">
              <path d="M7 1l3.500 3.500L7 8M10 4.500H6q-5 0-5 6.500" />
            </svg>
            <Caret color="#888" />
          </QuickButton>
        </QuickTools>
        <SideTab $width={34} aria-label="Home">
          <svg width="14" height="13" viewBox="0 0 14 13" fill="currentColor">
            <path d="M7 0l3 3V1h2v4l2 2h-2v6H8.500V9h-3v4H2V7H0z" />
          </svg>
        </SideTab>
        <DocumentTab>
          <DocumentTitle>
            <svg width="13" height="15" viewBox="0 0 13 15">
              <path d="M6.500 0L13 3.500v7.500L6.500 15 0 11V3.500z" fill="#ff7a1f" />
              <path d="M6.500 0L13 3.500 6.500 7 0 3.500z" fill="#ffb27a" />
              <path d="M6.500 7L13 3.500V11l-6.500 4z" fill="#f26a0c" />
            </svg>
            Medal Mould v1*
          </DocumentTitle>
          <CloseTab aria-label="Close document">
            <svg width="8" height="8" viewBox="0 0 8 8">
              <path d="M.5.5l7 7M7.500.5l-7 7" stroke="#666" strokeWidth="1.200" />
            </svg>
          </CloseTab>
        </DocumentTab>
        <SideTab $width={25} aria-label="New document">
          <svg width="11" height="11" viewBox="0 0 11 11">
            <path d="M5.500 0v11M0 5.500h11" stroke="#777" strokeWidth="2.200" />
          </svg>
        </SideTab>
        <AccountTools>
          <QuickButton $width={29} aria-label="Extensions">
            <svg width="14" height="14" viewBox="0 0 14 14" fill="none" stroke="currentColor">
              <path d="M9.500 1.500A6 6 0 1 0 12.900 6" strokeWidth="2" />
              <path d="M3.500 10.500l1-4.500 3-2.500 3.500 3.500-2.500 3-3 .5z" fill="currentColor" stroke="none" />
              <path d="M8 4.500l2.500-2.500M10 6.500l2.500-2.500" strokeWidth="1.600" />
            </svg>
          </QuickButton>
          <QuickButton $width={29} aria-label="Job status">
            <svg width="14" height="14" viewBox="0 0 14 14" fill="none" stroke="currentColor">
              <circle cx="7" cy="7" r="6.400" />
              <circle cx="7" cy="7" r="4.800" fill="currentColor" />
              <path d="M7 3.500V7h3.500" stroke="#ddd" strokeWidth="1.400" />
            </svg>
          </QuickButton>
          <QuickButton $width={29} aria-label="Notifications">
            <svg width="13" height="14" viewBox="0 0 13 14" fill="currentColor">
              <path d="M6.500 0q1 0 1 1.200Q10.500 2 10.500 6q0 3 2 5H.5q2-2 2-5 0-4 3-4.800Q5.500 0 6.500 0zM4.500 12h4q-2 3-4 0z" />
            </svg>
          </QuickButton>
          <QuickButton $width={29} aria-label="Help">
            <svg width="14" height="14" viewBox="0 0 14 14">
              <circle cx="7" cy="7" r="7" fill="currentColor" />
              <path d="M4.800 5.500Q4.800 3.300 7 3.300t2.200 2q0 1.300-2.200 2.300v1M7 9.800v1.600" fill="none" stroke="#e8e8e8" strokeWidth="1.600" />
            </svg>
          </QuickButton>
          <Avatar aria-label="Account">
            <svg width="21" height="21" viewBox="0 0 21 21">
              <clipPath id="avatar"><circle cx="10.500" cy="10.500" r="10.500" /></clipPath>
              <g clipPath="url(#avatar)">
                <path d="M0 0h21v21H0z" fill="#92a8c8" />
                <ellipse cx="10.500" cy="7" rx="5" ry="6.500" fill="#4c5c74" />
                <path d="M8 11h5v4q6 1 6 6H2q0-5 6-6z" fill="#4c5c74" />
              </g>
            </svg>
          </Avatar>
        </AccountTools>
      </TitleBar>

      <Ribbon>
        <WorkspaceButton>
          DESIGN <Caret />
        </WorkspaceButton>
        <RibbonMain>
          <TabRow>
            {tabs.map((t, i) => (
              <RibbonTab key={t} $active={i === 0}>{t}</RibbonTab>
            ))}
          </TabRow>
          <GroupRow>
            {groups.map((g) => (
              <Group key={g.label} $width={g.width}>
                <IconRow>
                  {g.tools.map(({ name, icon: Icon, active }) => (
                    <IconButton key={name} aria-label={name} $active={active}>
                      <Icon />
                    </IconButton>
                  ))}
                </IconRow>
                <GroupLabel>{g.label} <Caret /></GroupLabel>
              </Group>
            ))}
          </GroupRow>
        </RibbonMain>
      </Ribbon>
      <RibbonEdge />

      <WorkArea>
        <Model />
        <LeftDock>
          <div>
            <PanelHeader $left={3}>
              <DoubleArrow left />
              <PanelTitle>BROWSER</PanelTitle>
              <RoundMark />
            </PanelHeader>
            <Tree>
              <TreeItem $root>
                <Expander aria-label="Collapse Medal Mould v1">
                  <svg width="9" height="8" viewBox="0 0 9 8"><path d="M7.500 1v6H2z" fill="#555" stroke="#222" /></svg>
                </Expander>
                <TreeBody $end={4}>
                  <Eye />
                  <RootName>
                    <svg width="15" height="14" viewBox="0 0 15 14" strokeLinejoin="round">
                      <path d="M1 3l2-2h5v6H6v6H1z" fill="#c3c9d3" stroke="#eceff3" />
                      <path d="M6 9l2-2h6v4l-2 2H6z" fill="#aab3c1" stroke="#eceff3" />
                    </svg>
                    Medal Mould v1
                  </RootName>
                  <RootMarks>
                    <svg width="13" height="13" viewBox="0 0 13 13">
                      <circle cx="6.500" cy="6.500" r="6" fill="#e0393a" />
                      <text x="3" y="9.500" fontSize="9" fontWeight="bold" fill="#fff">R</text>
                      <path d="M8 8l4 2-1.500 3H9z" fill="#fff" stroke="#444" strokeWidth=".6" />
                    </svg>
                    <svg width="13" height="13" viewBox="0 0 13 13">
                      <circle cx="6.500" cy="6.500" r="5.500" fill="#dbe1ea" stroke="#a3a8b0" />
                      <circle cx="6.500" cy="6.500" r="2.700" fill="#333" />
                    </svg>
                  </RootMarks>
                </TreeBody>
              </TreeItem>
              {tree.map((n, i) => (
                <TreeItem key={i}>
                  <Expander aria-label={`Expand ${n.label}`}><Arrow /></Expander>
                  <TreeBody $end={n.end} $hatched={n.hatched}>
                    {n.icons}
                    <TreeLabel $indent={n.indent}>{n.label}</TreeLabel>
                  </TreeBody>
                </TreeItem>
              ))}
            </Tree>
          </div>
          <PanelHeader $left={21}>
            <PanelTitle>COMMENTS</PanelTitle>
            <RoundMark plus />
          </PanelHeader>
        </LeftDock>

        <BottomDock>
          <NavBar>
            <NavButton $width={27} aria-label="Orbit">
              <svg width="14" height="14" viewBox="0 0 14 14" fill="none" stroke="#666">
                <ellipse cx="7" cy="7.500" rx="6" ry="2.500" />
                <path d="M7 2v10" strokeWidth="1.600" />
                <path d="M4.500 3L7 .5 9.500 3M4.500 11L7 13.500 9.500 11" />
              </svg>
              <Caret size={5} />
            </NavButton>
            <NavButton $width={22} aria-label="Look at">
              <svg width="13" height="13" viewBox="0 0 13 13" fill="none" stroke="#777">
                <path d="M.5 5.500h12v7H.5zM2.500 5V3h8v2M4 2V.500M7 2V.500M10 2V.500M3 8h7v3H3z" fill="#ccc" />
              </svg>
            </NavButton>
            <NavButton $width={23} aria-label="Pan">
              <svg width="14" height="14" viewBox="0 0 14 14" fill="#fafafa" stroke="#666" strokeWidth=".9" strokeLinejoin="round">
                <path d="M4.500 13Q3 10 .8 8q1-1.500 3 .3L2.700 3.200q1-1 1.700.3l.9 3L5.500 1.500q1-1.500 1.800 0l.3 4.500 1-4.200q1.200-1 1.700.4l-.5 4.600 1.500-2.600q1.200-.4 1.200 1-.8 5-2.700 7.800z" />
              </svg>
            </NavButton>
            <NavButton $width={23} aria-label="Zoom">
              <svg width="15" height="14" viewBox="0 0 15 14" fill="none">
                <path d="M8.500 8.500l5 5" stroke="#555" strokeWidth="2.200" />
                <circle cx="5.500" cy="5.500" r="4.500" fill="#e4f1f2" stroke="#777" />
                <path d="M11 2.500h4M13 .5v4M11 6.500h3" stroke="#888" />
              </svg>
            </NavButton>
            <NavButton $width={31} aria-label="Zoom window">
              <svg width="15" height="14" viewBox="0 0 15 14" fill="none">
                <path d="M.5.500h13v13H.5z" stroke="#aaa" strokeDasharray="2 1" />
                <path d="M8.500 8.500l5 5" stroke="#555" strokeWidth="2.200" />
                <circle cx="6" cy="6" r="4.500" fill="#e4f1f2" stroke="#777" />
              </svg>
              <Caret size={5} />
            </NavButton>
            <NavButton $width={27} aria-label="Display settings">
              <svg width="14" height="14" viewBox="0 0 14 14">
                <path d="M.5 1h13v9H.5z" fill="#7da9d8" stroke="#999" />
                <path d="M6 10h2v2h2v1H4v-1h2z" fill="#888" />
              </svg>
              <Caret size={5} />
            </NavButton>
            <NavButton $width={27} aria-label="Grid and snaps">
              <svg width="14" height="14" viewBox="0 0 14 14">
                <path d="M.5.500h13v13H.5z" fill="#999" stroke="#888" />
                <path d="M.5 3.500h13M.5 6.500h13M.5 9.500h13M3.500.500v13M6.500.500v13M9.500.500v13" stroke="#ababab" />
              </svg>
              <Caret size={5} />
            </NavButton>
            <NavButton $width={27} aria-label="Viewports">
              <svg width="14" height="12" viewBox="0 0 14 12">
                <path d="M.5.500h13v11H.5z" fill="#86addb" stroke="#7a8ba3" />
                <path d="M7 0v12M0 6h14" stroke="#4f709c" />
              </svg>
              <Caret size={5} />
            </NavButton>
            <NavEnd />
          </NavBar>
        </BottomDock>

        <RightDock>
          <CubeHolder><ViewCube /></CubeHolder>
          <Dialog aria-label="Split body">
            <DialogHeader>
              <RoundMark />
              <PanelTitle>SPLIT BODY</PanelTitle>
              <DoubleArrow />
            </DialogHeader>
            <DialogBody>
              <Field>
                <span>Body to Split</span>
                <PickButton><Pointer />2 s...</PickButton>
                <ClearButton aria-label="Clear body"><Cross /></ClearButton>
              </Field>
              <Field>
                <span>Splitting Tool(s)</span>
                <PickButton $active><Pointer active />1 s...</PickButton>
                <ClearButton aria-label="Clear splitting tool"><Cross /></ClearButton>
              </Field>
              <Field>
                <label htmlFor="extend">Extend Splitting Tool(s)</label>
                <CheckBox id="extend" type="checkbox" />
              </Field>
            </DialogBody>
            <DialogFooter>
              <InfoButton aria-label="Info">
                <svg width="12" height="12" viewBox="0 0 12 12">
                  <circle cx="6" cy="6" r="5.700" fill="#000" />
                  <path d="M6 2.200v1.800M4.800 5.500H6v3.500M4.500 9.200h3" stroke="#fff" strokeWidth="1.500" fill="none" />
                </svg>
              </InfoButton>
              <DialogButton>OK</DialogButton>
              <DialogButton>Cancel</DialogButton>
            </DialogFooter>
          </Dialog>
          <AssistButton aria-label="Assistant">
            <svg width="15" height="15" viewBox="0 0 15 15">
              <path d="M7.500.5A7 7 0 0 1 14.500 7.500V14.500H7.500A7 7 0 0 1 7.500.5z" fill="#111" />
              <path d="M3.500 9.500l3-2.500M5.500 10l4-3M4.500 7q3-3 6-1.500l1.500 3" stroke="#eee" strokeWidth="1.300" fill="none" />
            </svg>
          </AssistButton>
        </RightDock>
      </WorkArea>

      <Timeline>
        {transport.map((t) => (
          <PlayButton key={t.name} aria-label={t.name}>
            <svg width="12" height="12" viewBox="0 0 12 12">
              <path d={t.d} fill="#555" stroke="#555" strokeWidth=".6" />
            </svg>
          </PlayButton>
        ))}
        <TimelineTrack><TimelineDrawing /></TimelineTrack>
        <button aria-label="Timeline settings"><Gear size={14} /></button>
      </Timeline>
    </Shell>
  );
}
